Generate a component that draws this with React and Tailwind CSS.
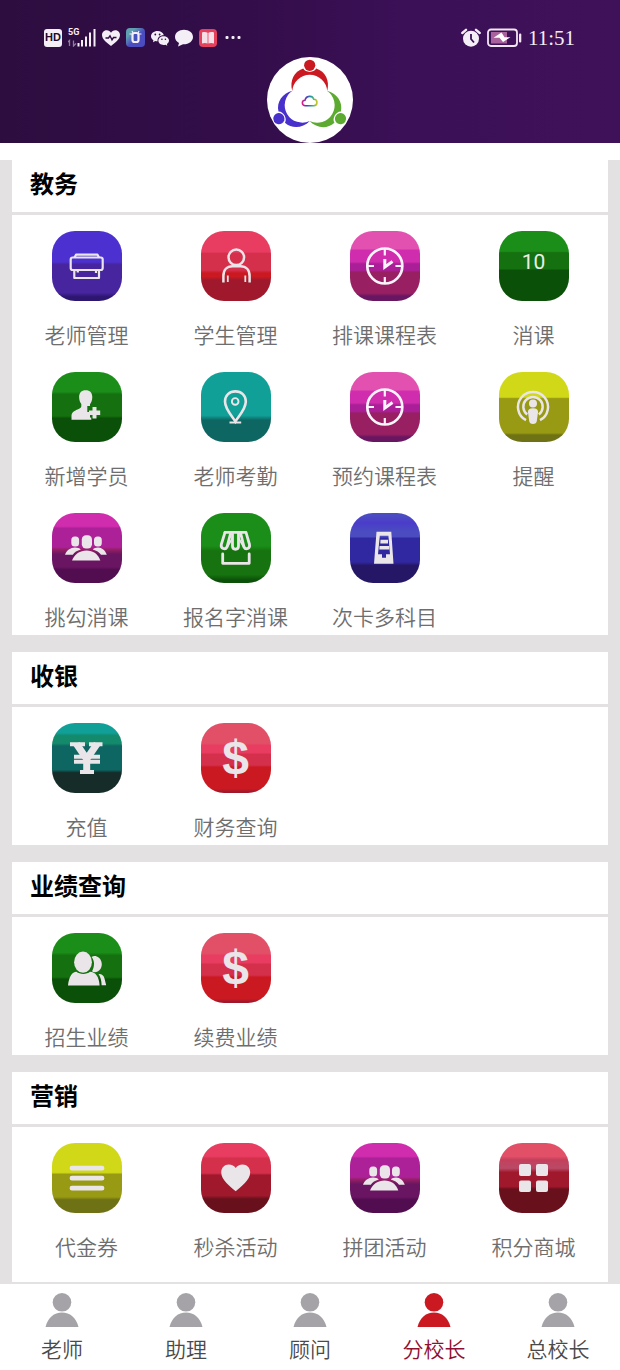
import React from 'react';

const INK = '#e9e5e8';

function Glyph({ children }) {
  return (
    <svg viewBox="0 0 70 70" className="size-[70px]" fill="none" aria-hidden="true">
      {children}
    </svg>
  );
}

function TeacherIcon() {
  return (
    <Glyph>
      <g stroke={INK} strokeWidth="2.2" strokeLinejoin="round">
        <rect x="18.7" y="26.5" width="32" height="12.5" rx="2" />
        <path d="M22.5 26.5 24 23.7H45.5L47 26.5" />
        <path d="M22.3 39.5V47H47V39.5M25.5 41.5 26 39.5M44 39.5V42" />
      </g>
    </Glyph>
  );
}

function StudentIcon() {
  return (
    <Glyph>
      <g stroke={INK} strokeWidth="2.5">
        <circle cx="35.3" cy="26.3" r="7.8" />
        <path d="M22.4 51.5V45C22.4 39 26 35.3 31.5 35.3H39.5C45 35.3 48.6 39 48.6 45V51.5" />
        <path d="M26.8 44.5V51M44.3 44.5V51" strokeWidth="1.8" />
      </g>
    </Glyph>
  );
}

function ClockIcon() {
  return (
    <Glyph>
      <g stroke="#fbf4fa" strokeWidth="2.7">
        <circle cx="34.8" cy="35" r="17.5" />
        <path d="M34.8 18V24.5M34.8 46V52M18 35H24M45.5 35H51.5" strokeWidth="2.2" />
        <path d="M34.8 28V36L42.5 30.5" strokeWidth="3" />
      </g>
    </Glyph>
  );
}

function AddUserIcon() {
  return (
    <Glyph>
      <path
        fill={INK}
        d="M33.7 18.2C38 18.2 40.3 20.8 40.3 25C40.3 28.5 39 30.8 38 32.2V34H35.3V40H38V45.5H39.3V47.8H19.5V43.8C19.5 40.4 22 39 25.5 37.4C28 36.3 29.3 35.6 29.3 34.2V32C28.2 30.6 27.1 28.4 27.1 25C27.1 20.8 29.4 18.2 33.7 18.2Z"
      />
      <path fill={INK} d="M40.5 35H44.5V38.6H48.2V43H44.5V46.6H40.5V43H37V38.6H40.5Z" />
    </Glyph>
  );
}

function PinIcon() {
  return (
    <Glyph>
      <g stroke={INK} strokeWidth="2.6">
        <path d="M34.4 49.5C32 45 24 37.5 24 29.5C24 23.3 28.5 19.4 34.4 19.4S44.8 23.3 44.8 29.5C44.8 37.5 36.8 45 34.4 49.5Z" />
        <circle cx="34.2" cy="29.4" r="3.3" strokeWidth="1.9" />
        <path d="M28.5 50.6H40.2" strokeWidth="2" />
      </g>
    </Glyph>
  );
}

function PodcastIcon() {
  return (
    <Glyph>
      <g stroke={INK} strokeWidth="2.5">
        <path d="M27 48.2A15 15 0 1 1 41 48.2" />
        <path d="M28.2 42.4A9.7 9.7 0 1 1 39.8 42.4" />
      </g>
      <circle cx="34" cy="31.6" r="4" fill={INK} />
      <path
        fill={INK}
        d="M34 36.2C37.5 36.2 39.2 37.6 39 40.3L37.8 49C37.5 51 36.3 52 34 52S30.5 51 30.2 49L29 40.3C28.8 37.6 30.5 36.2 34 36.2Z"
      />
    </Glyph>
  );
}

function GroupIcon() {
  return (
    <Glyph>
      <g fill={INK}>
        <rect x="19.3" y="23.4" width="7.8" height="10.2" rx="3.5" />
        <rect x="42" y="23.4" width="7.8" height="10.2" rx="3.5" />
        <rect x="29.8" y="22.3" width="10.2" height="13.2" rx="4.2" />
        <path d="M13 41.8C14.5 37.5 18.5 34.6 23 34.6C25.5 34.6 27.5 35.3 28.8 36.5C25 37.5 22.5 39.3 20.8 41.8Z" />
        <path d="M54.8 41.8C53.3 37.5 50 34.6 46 34.6C43.8 34.6 42 35.3 40.8 36.5C44.5 37.5 47.3 39.3 49 41.8Z" />
        <path d="M20 47.5C22.5 41 28 37.4 34.5 37.4C41 37.4 46.2 41 48.3 47.5Z" />
      </g>
    </Glyph>
  );
}

function ShopIcon() {
  return (
    <Glyph>
      <g stroke={INK} strokeWidth="2.8" strokeLinejoin="round" strokeLinecap="round">
        <path d="M24 19.4H45L48.5 31.5C49.3 35.5 44.7 37.3 43 34L39.5 19.6" />
        <path d="M24 19.4 20.3 31.5C19.5 35.5 24.3 37.3 26 34L29.8 19.6" />
        <path d="M31.5 20.5V33C31.5 37.3 37.5 37.3 37.5 33V20.5" />
        <path d="M31.5 25 26.3 34M37.5 25 42.7 34" strokeWidth="1.6" />
        <path d="M21.7 41V50.3H48.2V41" />
      </g>
    </Glyph>
  );
}

function PassIcon() {
  return (
    <Glyph>
      <path
        fill={INK}
        fillRule="evenodd"
        d="M26.5 18.8H41.3L43.5 50.7H24ZM29.8 22.8 28 41.2H32V44.8H36V41.2H40L38.4 22.8Z"
      />
      <path fill={INK} d="M30.5 26.8H38V30.5H30.3ZM29.5 33H39.3V36.4H29.3Z" />
    </Glyph>
  );
}

function PeopleIcon() {
  return (
    <Glyph>
      <g fill={INK}>
        <path d="M39.5 24C41 23 43 22.8 44.7 23.4C48 24.5 49.8 27.8 49.8 31.2C49.8 35.5 46.8 39.2 43 39.2C41.8 39.2 40.8 38.9 40 38.2C41.3 36.3 42 33.5 42 30.5C42 28 41 25.5 39.5 24Z" />
        <path d="M46.5 41C50 40.8 51.7 42.5 52.5 45.5L54.2 52.2H49.6C49.6 47.5 48.5 44 46.5 41Z" />
        <ellipse cx="31" cy="29.2" rx="8.9" ry="10.6" />
        <path d="M16 52.4C17 44 20 38.8 24.5 38.8C27.5 41.6 35 41.6 38 38.8C43.5 38.8 47.2 44 47.6 52.4Z" />
      </g>
    </Glyph>
  );
}

function ListIcon() {
  return (
    <Glyph>
      <g stroke={INK} strokeWidth="4.8" strokeLinecap="round">
        <path d="M20 25.2H50M20 35.2H50M20 45.2H50" />
      </g>
    </Glyph>
  );
}

function HeartIcon() {
  return (
    <Glyph>
      <path
        fill={INK}
        d="M34.7 48.2C29.5 44 20.2 37 20.2 29.6C20.2 24.8 23.6 21.6 27.7 21.6C30.8 21.6 33.3 23 34.7 25C36.1 23 38.6 21.6 41.7 21.6C45.8 21.6 49.2 24.8 49.2 29.6C49.2 37 39.9 44 34.7 48.2Z"
      />
    </Glyph>
  );
}

function GridIcon() {
  return (
    <Glyph>
      <g fill={INK}>
        <rect x="20" y="21" width="12" height="12" rx="2" />
        <rect x="37" y="21" width="12" height="12" rx="2" />
        <rect x="20" y="37.4" width="12" height="11.6" rx="2" />
        <rect x="37" y="37.4" width="12" height="11.6" rx="2" />
      </g>
    </Glyph>
  );
}

function TenIcon() {
  return <span className="pb-2 font-[Roboto,sans-serif] text-[21px] leading-7 text-[#e9f0e6]">10</span>;
}

function YenIcon() {
  return (
    <Glyph>
      <g stroke={INK}>
        <path d="M24.5 21 34.7 36 45 21M34.7 34V49" strokeWidth="7" />
        <path d="M18 21.2H33M37 21.2H50.5M28 49H42" strokeWidth="4" />
        <path d="M22 33.7H48M22 38.8H48" strokeWidth="4" />
      </g>
    </Glyph>
  );
}

function DollarIcon() {
  return (
    <span className="font-['Liberation_Sans',sans-serif] text-[48px] leading-[70px] font-bold text-[#e9e5e8]">$</span>
  );
}

const PINK =
  'bg-[linear-gradient(#e250b0_25%,#d02cae_28%,#d02cae_44%,#aa1f98_47%,#aa1f98_56%,#971f62_59%,#971f62_89%,#681662_93%)]';
const MAGENTA =
  'bg-[linear-gradient(#d02cae_19%,#ac2098_22%,#ac2098_49%,#962062_52%,#6a1562_59%,#6a1562_77%,#520c50_81%)]';
const ROSE =
  'bg-[linear-gradient(#e25068_29%,#e83c60_32%,#e83c60_42%,#d4304c_45%,#d4304c_60%,#cb1922_63%,#cb1922_94%,#a0182c_98%)]';
const GREEN = 'bg-[linear-gradient(#1a8e18_28%,#15700f_32%,#15700f_63%,#0a5008_66%)]';

const SECTIONS = [
  {
    title: '教务',
    items: [
      { label: '老师管理', Icon: TeacherIcon, tone: 'bg-[linear-gradient(#4c30d0_44%,#47259f_48%,#47259f_88%,#2d1670_94%)]' },
      { label: '学生管理', Icon: StudentIcon, tone: 'bg-[linear-gradient(#e83c60_30%,#d4304c_32%,#d4304c_56%,#cb1922_60%,#cb1922_65%,#a0182c_70%)]' },
      { label: '排课课程表', Icon: ClockIcon, tone: PINK },
      { label: '消课', Icon: TenIcon, tone: 'bg-[linear-gradient(#1a8e18_29%,#15700f_31%,#15700f_54%,#0a5008_56%)]' },
      { label: '新增学员', Icon: AddUserIcon, tone: GREEN },
      { label: '老师考勤', Icon: PinIcon, tone: 'bg-[linear-gradient(#10a098_62%,#0d6662_69%)]' },
      { label: '预约课程表', Icon: ClockIcon, tone: PINK },
      { label: '提醒', Icon: PodcastIcon, tone: 'bg-[linear-gradient(#d0d818_36%,#989a14_38%,#989a14_87%,#6f7214_90%)]' },
      { label: '挑勾消课', Icon: GroupIcon, tone: MAGENTA },
      { label: '报名字消课', Icon: ShopIcon, tone: 'bg-[linear-gradient(#1a8e18_47%,#17730f_54%,#17730f_88%,#0a5008_96%)]' },
      { label: '次卡多科目', Icon: PassIcon, tone: 'bg-[linear-gradient(#4a4cc0_4%,#4b3ccb_14%,#4a4cc0_26%,#4a4cc0_34%,#3028a0_36%,#3028a0_70%,#251766_75%)]' },
    ],
  },
  {
    title: '收银',
    items: [
      { label: '充值', Icon: YenIcon, tone: 'bg-[linear-gradient(#10a098_14%,#148a6c_18%,#148a6c_29%,#0d6662_33%,#0d6662_67%,#152c28_71%)]' },
      { label: '财务查询', Icon: DollarIcon, tone: ROSE },
    ],
  },
  {
    title: '业绩查询',
    items: [
      { label: '招生业绩', Icon: PeopleIcon, tone: GREEN },
      { label: '续费业绩', Icon: DollarIcon, tone: ROSE },
    ],
  },
  {
    title: '营销',
    items: [
      { label: '代金券', Icon: ListIcon, tone: 'bg-[linear-gradient(#d0d818_42%,#989a14_45%,#989a14_77%,#6f7214_81%)]' },
      { label: '秒杀活动', Icon: HeartIcon, tone: 'bg-[linear-gradient(#e83c60_19%,#d4304c_22%,#d4304c_43%,#a0182c_46%,#a0182c_75%,#68101c_80%)]' },
      { label: '拼团活动', Icon: GroupIcon, tone: MAGENTA },
      { label: '积分商城', Icon: GridIcon, tone: 'bg-[linear-gradient(#e25068_19%,#c4405c_24%,#b84a66_36%,#a0182c_42%,#a0182c_62%,#68101c_66%)]' },
    ],
  },
];

const TABS = ['老师', '助理', '顾问', '分校长', '总校长'];

function StatusBar() {
  return (
    <div className="flex h-[57px] items-center justify-between pt-[18px] pr-[45px] pl-[44px]">
      <div className="flex items-center gap-[6px]">
        <span className="flex size-[18px] items-center justify-center rounded-[3px] bg-[#f4eef6] font-['Liberation_Sans',sans-serif] text-[11px] font-bold text-[#1c0a28]">
          HD
        </span>
        <div className="relative h-[19px] w-7 text-[#f4eef6]">
          <span className="absolute top-0 left-0 font-[Roboto,sans-serif] text-[9px] leading-[9px] font-bold">5G</span>
          <svg viewBox="0 0 28 19" className="h-[19px] w-7" aria-hidden="true">
            <path d="M1.5 18V12.5L0 14M5.5 12.5V18L8 15.5" fill="none" stroke="#8f7d9a" strokeWidth="1.3" />
            <g fill="currentColor">
              <rect x="9.5" y="15" width="2" height="3.5" />
              <rect x="13" y="12" width="2" height="6.5" />
              <rect x="17" y="8.5" width="2" height="10" />
              <rect x="21" y="4.5" width="2" height="14" />
              <rect x="25.5" y="1" width="2" height="17.5" />
            </g>
          </svg>
        </div>
        <svg viewBox="0 0 18 18" className="size-[18px]" aria-hidden="true">
          <path fill="#f4eef6" d="M9 17C5 13.5 0 10.5 0 6C0 3 2.3 1.2 4.8 1.2C6.6 1.2 8.2 2.2 9 3.7C9.8 2.2 11.4 1.2 13.2 1.2C15.7 1.2 18 3 18 6C18 10.5 13 13.5 9 17Z" />
          <path d="M3.5 9H6.5L8 6.8 10 10.8 11.5 8.5H14.5" fill="none" stroke="#2f0d42" strokeWidth="1.4" />
        </svg>
        <svg viewBox="0 0 19 19" className="size-[19px]" aria-hidden="true">
          <defs>
            <linearGradient id="appTile" x1="0" y1="0" x2="1" y2="1">
              <stop offset="0.25" stopColor="#5f9fb0" />
              <stop offset="0.55" stopColor="#4a4cc0" />
            </linearGradient>
          </defs>
          <rect width="19" height="19" rx="4" fill="url(#appTile)" />
          <rect x="6.5" y="5" width="6" height="9" rx="2" fill="#4452bd" stroke="#f4eef6" strokeWidth="2.2" />
          <path d="M6 3 7 5M13 3 12 5M3.5 6H6M13 6H15.5" stroke="#f4eef6" strokeWidth="1.2" />
        </svg>
        <svg viewBox="0 0 18 18" className="size-[18px]" aria-hidden="true">
          <path fill="#f4eef6" d="M6.5 2C2.9 2 0 4.3 0 7.2C0 8.900 1 10.3 2.4 11.2L2 13.2 4.3 12C5 12.2 5.7 12.3 6.5 12.3C6.2 8.5 9 6.2 12.8 6.3C12.3 3.8 9.7 2 6.5 2Z" />
          <path fill="#f4eef6" d="M12.6 7.2C9.6 7.2 7.4 9.1 7.4 11.6S9.6 16 12.6 16C13.2 16 13.8 15.9 14.4 15.7L16.3 16.8 15.9 15C17.2 14.2 18 13 18 11.6C18 9.1 15.6 7.2 12.6 7.2Z" />
          <g fill="#2f0d42">
            <circle cx="4.3" cy="5.5" r="0.9" />
            <circle cx="8.6" cy="5.5" r="0.9" />
            <circle cx="10.9" cy="10.3" r="0.8" />
            <circle cx="14.4" cy="10.3" r="0.8" />
          </g>
        </svg>
        <svg viewBox="0 0 18 18" className="size-[18px]" aria-hidden="true">
          <path fill="#f4eef6" d="M9 0.8C4 0.8 0 3.8 0 8C0 10.5 1.5 12.7 4 14L3 17.5 8 15.3C14 15.5 18 12.2 18 8C18 3.8 14 0.8 9 0.8Z" />
        </svg>
        <svg viewBox="0 0 18 18" className="size-[18px]" aria-hidden="true">
          <rect width="18" height="18" rx="4" fill="#e5405c" />
          <path fill="#f7dfe8" d="M3 3.5C5 2.8 7.2 2.9 8.6 3.8V14.5C7 13.7 5 13.8 3 14.4ZM15 3.5C13 2.8 10.8 2.9 9.4 3.8V14.5C11 13.7 13 13.8 15 14.4Z" />
        </svg>
        <svg viewBox="0 0 18 18" className="size-[18px]" fill="#f4eef6" aria-hidden="true">
          <rect x="2.5" y="7" width="3" height="3" rx="1" />
          <rect x="8.5" y="7" width="3" height="3" rx="1" />
          <rect x="14.5" y="7" width="3" height="3" rx="1" />
        </svg>
      </div>
      <div className="flex items-center gap-[6px]">
        <svg viewBox="0 0 20 20" className="size-5" aria-hidden="true">
          <circle cx="10" cy="10.7" r="8" fill="#f4eef6" />
          <path d="M1.3 5 5 1.8M18.7 5 15 1.8" stroke="#f4eef6" strokeWidth="2.4" strokeLinecap="round" />
          <path d="M10 6V11L13 14.5" fill="none" stroke="#3a1055" strokeWidth="1.8" />
        </svg>
        <svg viewBox="0 0 35 19" className="h-[19px] w-[35px]" aria-hidden="true">
          <rect x="1" y="1.5" width="29" height="16.5" rx="3" fill="none" stroke="#f1e6f2" strokeWidth="1.8" />
          <rect x="4" y="4" width="16" height="11.5" fill="#a8629c" />
          <path d="M14.500 4.5 6.5 9.8H12.5L16 14 23.5 9.2H17.5Z" fill="#fff" />
          <rect x="32" y="5.5" width="2.3" height="9" rx="1" fill="#f1e6f2" />
        </svg>
        <span className="font-['Liberation_Serif',serif] text-[21px] leading-6 text-[#f4eef6]">11:51</span>
      </div>
    </div>
  );
}

function LogoFigure() {
  return (
    <>
      <path d="M25.3 34C22.5 24 27 14.5 36.2 11.6C38.5 16 47 16 49.2 11.6C58.5 14.5 63 24 60.2 34A17.5 17.5 0 0 0 25.3 34Z" />
      <circle cx="42.7" cy="8.3" r="5.6" />
    </>
  );
}

function Logo() {
  return (
    <svg viewBox="0 0 86 86" className="mx-auto block size-[86px]" role="img" aria-label="logo">
      <defs>
        <linearGradient id="cloudLine">
          <stop offset="0" stopColor="#d81f8c" />
          <stop offset="0.3" stopColor="#4a3cc0" />
          <stop offset="0.6" stopColor="#15a0a0" />
          <stop offset="1" stopColor="#c8c820" />
        </linearGradient>
      </defs>
      <circle cx="43" cy="43" r="43" fill="#fff" />
      <g fill="#cb1922">
        <LogoFigure />
      </g>
      <g fill="#5cab30" transform="rotate(120 42.7 43.9)">
        <LogoFigure />
      </g>
      <g fill="#4730cc" transform="rotate(240 42.7 43.9)">
        <LogoFigure />
      </g>
      <path
        d="M38.5 48.8C34.5 48.5 34.3 43.5 38 43.2C39 38.5 45.5 38 46.8 42.2C51 42.2 51 48.5 46.8 48.8Z"
        fill="none"
        stroke="url(#cloudLine)"
        strokeWidth="1.6"
      />
    </svg>
  );
}

function Section({ title, items }) {
  return (
    <section className="flex flex-col last:grow">
      <h2 className="flex h-[52px] items-center bg-white px-[18px] pb-1.5 text-[24px] font-bold text-black">{title}</h2>
      <div className="mt-[3px] grid grow grid-cols-4 content-start gap-y-[23px] bg-white pt-4 pb-1">
        {items.map(({ label, Icon, tone }) => (
          <button key={label} type="button" className="flex flex-col items-center gap-[18px]">
            <span className={`flex size-[70px] items-center justify-center overflow-hidden rounded-[23px] ${tone}`}>
              <Icon />
            </span>
            <span className="text-[21px] leading-[30px] font-[350] whitespace-nowrap text-[#6e6e6e]">{label}</span>
          </button>
        ))}
      </div>
    </section>
  );
}

function TabButton({ label, active }) {
  return (
    <button
      type="button"
      aria-current={active ? 'page' : undefined}
      className={`flex flex-1 flex-col items-center gap-1.5 pt-[9px] ${active ? 'text-[#cb1922]' : 'text-[#a5a3a8]'}`}
    >
      <svg viewBox="0 0 34 34" className="size-[34px]" fill="currentColor" aria-hidden="true">
        <circle cx="17" cy="9.3" r="9.3" />
        <path d="M0.5 34C3 24.5 9 19.6 17 19.6S31 24.5 33.5 34Z" />
      </svg>
      <span className={`text-[21px] leading-[30px] font-[350] ${active ? 'text-[#8f0f30]' : 'text-[#4a4a4a]'}`}>{label}</span>
    </button>
  );
}

export default function App() {
  return (
    <div className="flex min-h-screen flex-col bg-white font-['Noto_Sans_CJK_SC',sans-serif]">
      <header className="bg-[linear-gradient(90deg,#2d0d40_0%,#330d4a_40%,#3b1056_65%,#3f1159_100%)]">
        <StatusBar />
        <Logo />
      </header>
      <main className="mt-[17px] flex grow flex-col gap-[17px] bg-[#e4e1e3] px-3 pb-0.5">
        {SECTIONS.map((section) => (
          <Section key={section.title} {...section} />
        ))}
      </main>
      <nav className="flex h-[86px] bg-white">
        {TABS.map((label) => (
          <TabButton key={label} label={label} active={label === '分校长'} />
        ))}
      </nav>
    </div>
  );
}
